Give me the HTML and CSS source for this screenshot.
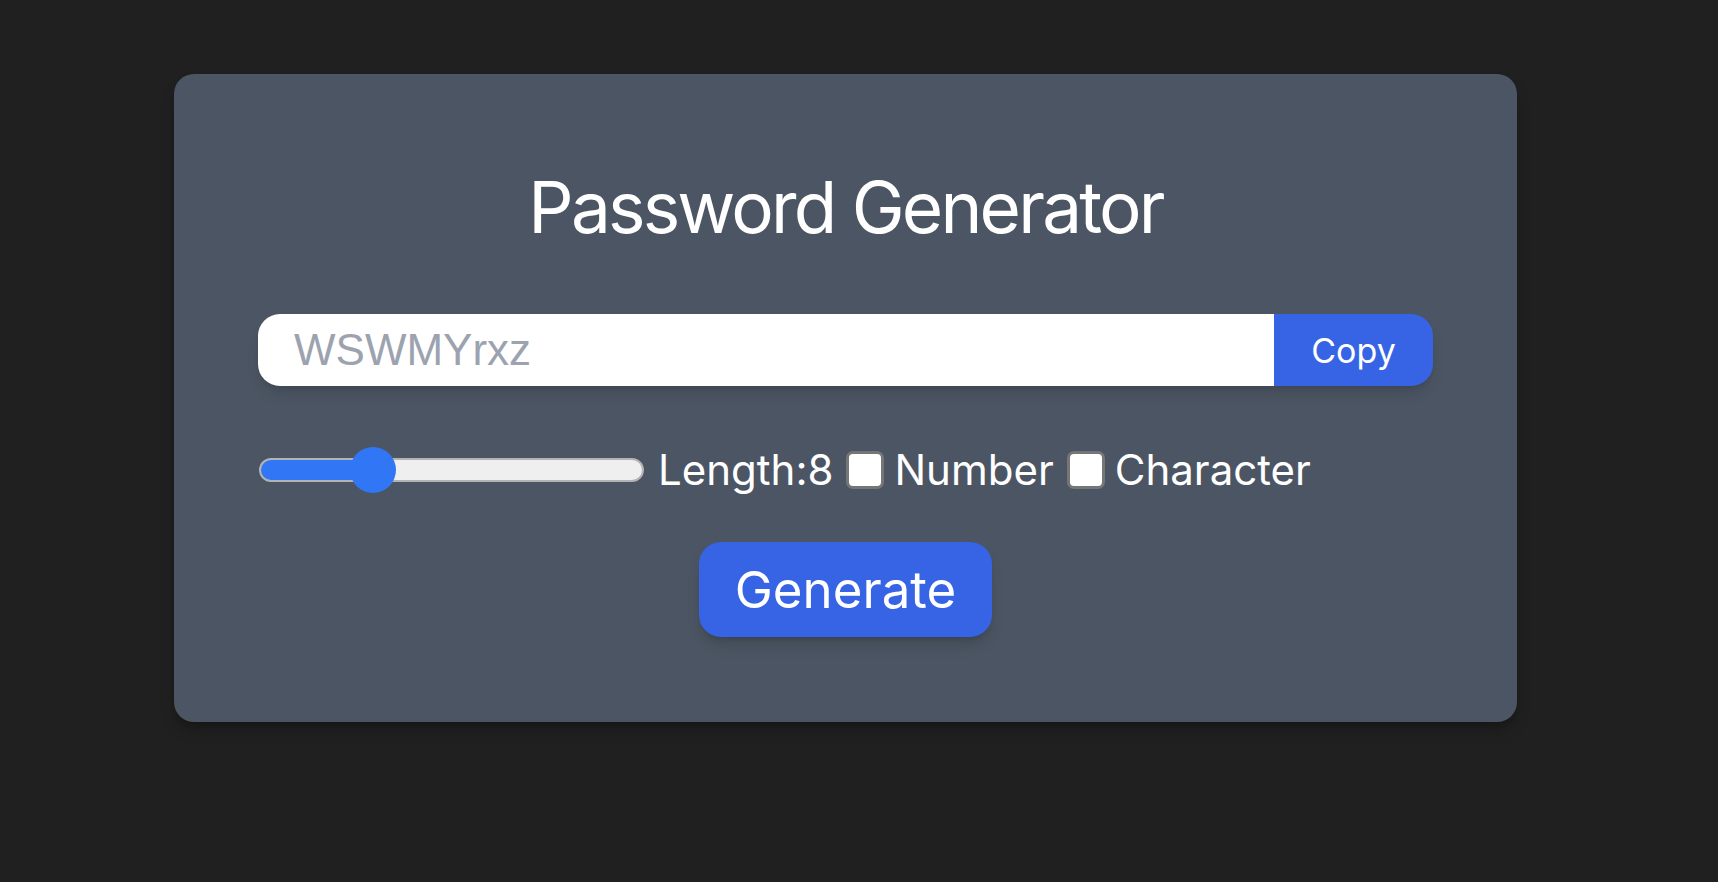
FILE: index.html
```html
<!DOCTYPE html>
<html lang="en">
<head>
<meta charset="utf-8">
<title>Password Generator</title>
<link rel="stylesheet" href="styles.css">
</head>
<body>
<div class="page">
  <main class="card">
    <h1 class="title">Password Generator</h1>
    <div class="output">
      <input class="password" type="text" placeholder="WSWMYrxz" readonly>
      <button class="copy" type="button">Copy</button>
    </div>
    <div class="options">
      <input class="range" type="range" min="0" max="30" value="8" style="--fill: 29.4%">
      <label class="label">Length:8</label>
      <input class="check" type="checkbox" id="num">
      <label class="label" for="num">Number</label>
      <input class="check" type="checkbox" id="chr">
      <label class="label" for="chr">Character</label>
    </div>
    <button class="generate" type="button">Generate</button>
  </main>
</div>
</body>
</html>
```

FILE: styles.css
```css
* { box-sizing: border-box; }

html, body {
  margin: 0;
  padding: 0;
  background: #202020;
  height: 100%;
}

body {
  font-family: Inter, "Noto Sans", "Liberation Sans", sans-serif;
  color: #ffffff;
}

.page {
  padding: 74px 0 0 174px;
}

.card {
  width: 1343px;
  height: 648px;
  background: #4c5563;
  border-radius: 20px;
  box-shadow: 0 10px 15px -3px rgba(0,0,0,0.25), 0 4px 6px -4px rgba(0,0,0,0.25);
  padding: 90px 84px 0 84px;
  display: flex;
  flex-direction: column;
  align-items: center;
}

.title {
  margin: 0;
  font-size: 71px;
  font-weight: 400;
  line-height: 86px;
  letter-spacing: -2.8px;
}

.output {
  margin-top: 64px;
  width: 100%;
  height: 72px;
  display: flex;
  border-radius: 22px;
  overflow: hidden;
  box-shadow: 0 10px 15px -3px rgba(0,0,0,0.12), 0 4px 6px -4px rgba(0,0,0,0.12);
}

.password {
  flex: 1;
  min-width: 0;
  border: 0;
  outline: none;
  background: #ffffff;
  padding: 0 0 0 36px;
  font-family: "Liberation Sans", Arial, sans-serif;
  font-size: 44px;
  color: #111827;
}

.password::placeholder {
  color: #9ca3af;
}

.copy {
  width: 159px;
  border: 0;
  background: #3764e4;
  color: #ffffff;
  font-family: Inter, "Noto Sans", sans-serif;
  font-size: 34px;
  padding: 0;
}

.options {
  margin-top: 60px;
  width: 100%;
  height: 48px;
  display: flex;
  align-items: center;
}

.range {
  -webkit-appearance: none;
  appearance: none;
  width: 385px;
  height: 46px;
  margin: 0 0 0 1px;
  background: transparent;
  flex: none;
}

.range::-webkit-slider-runnable-track {
  height: 24px;
  border-radius: 12px;
  border: 2px solid #b3b3b3;
  background: linear-gradient(to right, #3177f5 0, #3177f5 var(--fill), #efefef var(--fill), #efefef 100%);
}

.range::-webkit-slider-thumb {
  -webkit-appearance: none;
  appearance: none;
  width: 46px;
  height: 46px;
  margin-top: -13px;
  border-radius: 50%;
  background: #3177f5;
  border: 0;
}

.label {
  font-size: 42px;
  line-height: 48px;
  letter-spacing: 0;
  color: #ffffff;
  white-space: nowrap;
}

.range + .label {
  margin-left: 14px;
}

.check {
  -webkit-appearance: none;
  appearance: none;
  width: 38px;
  height: 38px;
  margin: 0 10px 0 13px;
  border: 3px solid #767676;
  border-radius: 7px;
  background: #ffffff;
  flex: none;
}

.generate {
  margin-top: 48px;
  height: 95px;
  padding: 0 36px;
  border: 0;
  border-radius: 22px;
  background: #3764e4;
  color: #ffffff;
  font-family: Inter, "Noto Sans", sans-serif;
  font-size: 51px;
  box-shadow: 0 10px 15px -3px rgba(0,0,0,0.15), 0 4px 6px -4px rgba(0,0,0,0.15);
}
```
